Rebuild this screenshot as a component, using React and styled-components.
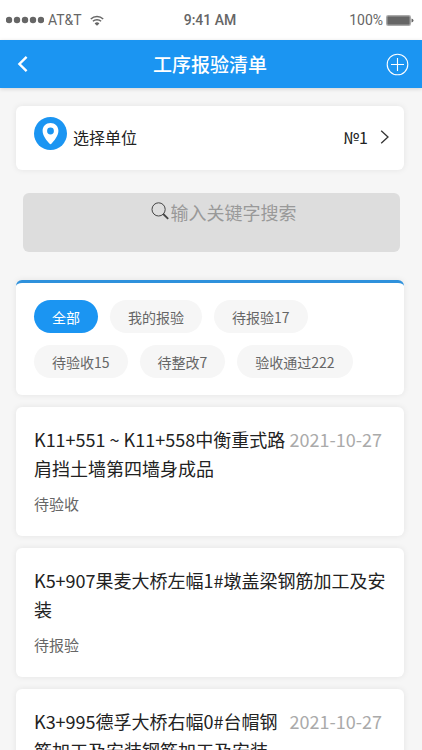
import React, { useState } from "react";
import styled, { createGlobalStyle } from "styled-components";

const filters = ["全部", "我的报验", "待报验17", "待验收15", "待整改7", "验收通过222"];

const records = [
    { title: "K11+551 ~ K11+558中衡重式路肩挡土墙第四墙身成品", date: "2021-10-27", state: "待验收" },
    { title: "K5+907果麦大桥左幅1#墩盖梁钢筋加工及安装", state: "待报验" },
    { title: "K3+995德孚大桥右幅0#台帽钢筋加工及安装钢筋加工及安装", date: "2021-10-27" },
];

function StatusBar() {
    return (
        <StatusWrap>
            <Carrier>
                <svg width="38" height="8" viewBox="0 0 38 8" fill="#666">
                    {[3, 11, 19, 27, 35].map((x) => (
                        <circle key={x} cx={x} cy="4" r="3.2" />
                    ))}
                </svg>
                <span>AT&amp;T</span>
                <WifiIcon width="14" height="11" viewBox="0 0 14 11">
                    <path d="M0.8 4 A9 9 0 0 1 13.2 4" fill="none" stroke="#666" strokeWidth="1.5" />
                    <path d="M2.9 6.3 A6 6 0 0 1 11.1 6.3" fill="none" stroke="#666" strokeWidth="1.5" />
                    <path d="M4.6 8.4 A3.6 3.6 0 0 1 9.4 8.4 L7 10.8 Z" fill="#666" />
                </WifiIcon>
            </Carrier>
            <Clock>9:41 AM</Clock>
            <Battery>
                <span>100%</span>
                <svg width="28" height="11" viewBox="0 0 28 11">
                    <rect x="0.5" y="0.5" width="24" height="10" rx="1" fill="#fff" stroke="#aaa" />
                    <rect x="1.2" y="1.2" width="22.6" height="8.6" fill="#666" />
                    <path d="M25.5 3.5 Q27.5 4 27.5 5.5 Q27.5 7 25.5 7.5 Z" fill="#666" />
                </svg>
            </Battery>
        </StatusWrap>
    );
}

function App() {
    const [active, setActive] = useState("全部");
    const [keyword, setKeyword] = useState("");

    return (
        <Page>
            <GlobalStyle />
            <StatusBar />
            <Header>
                <IconButton type="button" aria-label="返回">
                    <svg width="22" height="24" viewBox="0 0 22 24" fill="none" stroke="#fff" strokeWidth="2.4">
                        <path d="M14.6 4.8 L7.4 12 L14.6 19.2" />
                    </svg>
                </IconButton>
                <HeaderTitle>工序报验清单</HeaderTitle>
                <IconButton type="button" aria-label="新增">
                    <svg width="24" height="24" viewBox="0 0 24 24" fill="none" stroke="#fff" strokeWidth="1.1">
                        <circle cx="11.5" cy="12.5" r="10.3" />
                        <path d="M11.5 6 V19 M5 12.5 H18" />
                    </svg>
                </IconButton>
            </Header>

            <Content>
                <UnitButton type="button">
                    <svg width="33" height="33" viewBox="0 0 33 33">
                        <circle cx="16.5" cy="16.5" r="16.5" fill="#1b95f2" />
                        <path
                            fillRule="evenodd"
                            fill="#fff"
                            d="M16.5 6 C12 6 8.6 9.4 8.6 13.7 C8.6 19 13.4 24.2 15.4 26.6 Q16.5 27.8 17.6 26.6 C19.6 24.2 24.4 19 24.4 13.7 C24.4 9.4 21 6 16.5 6 Z M16.5 10.6 A3.4 3.4 0 1 1 16.5 17.4 A3.4 3.4 0 1 1 16.5 10.6 Z"
                        />
                    </svg>
                    <UnitLabel>选择单位</UnitLabel>
                    <UnitValue>
                        №1
                        <svg width="10" height="14" viewBox="0 0 10 14" fill="none" stroke="#333" strokeWidth="1.3">
                            <path d="M1.2 0.7 L8 7 L1.2 13.3" />
                        </svg>
                    </UnitValue>
                </UnitButton>

                <SearchBox>
                    <svg width="18" height="18" viewBox="0 0 18 18" fill="none" stroke="#444">
                        <circle cx="7.6" cy="7.4" r="6.6" strokeWidth="1" />
                        <path d="M12.2 12 L17.2 16.8" strokeWidth="1.8" />
                    </svg>
                    <SearchInput
                        type="text"
                        aria-label="搜索"
                        placeholder="输入关键字搜索"
                        value={keyword}
                        onChange={(e) => setKeyword(e.target.value)}
                    />
                </SearchBox>

                <FilterCard>
                    {filters.map((f) => (
                        <Chip key={f} type="button" $active={f === active} onClick={() => setActive(f)}>
                            {f}
                        </Chip>
                    ))}
                </FilterCard>

                <RecordList>
                    {records.map((r) => (
                        <Record key={r.title}>
                            <RecordTop>
                                <RecordTitle>{r.title}</RecordTitle>
                                {r.date && <RecordDate>{r.date}</RecordDate>}
                            </RecordTop>
                            {r.state && <RecordState>{r.state}</RecordState>}
                        </Record>
                    ))}
                </RecordList>
            </Content>
        </Page>
    );
}

const GlobalStyle = createGlobalStyle`
* {
    box-sizing: border-box;
}
body {
    margin: 0;
    background-color: #f6f6f6;
    font-family: "Noto Sans CJK SC", sans-serif;
    color: #222;
}
button, input {
    font-family: inherit;
    color: inherit;
    border: none;
    padding: 0;
    background: none;
}
svg {
    display: block;
    flex-shrink: 0;
}
`;

const Page = styled.div`
height: 100vh;
display: flex;
flex-direction: column;
overflow: hidden;
`;

const StatusWrap = styled.div`
display: grid;
grid-template-columns: 1fr auto 1fr;
align-items: center;
height: 40px;
flex-shrink: 0;
padding: 0 8px 0 6px;
background-color: #fff;
font-family: Roboto, "Liberation Sans", sans-serif;
font-size: 14px;
color: #666;
`;

const Carrier = styled.div`
display: flex;
align-items: center;
gap: 4px;
`;

const WifiIcon = styled.svg`
margin-left: 4px;
`;

const Clock = styled.span`
font-weight: 500;
`;

const Battery = styled.div`
display: flex;
align-items: center;
justify-content: flex-end;
gap: 3px;
`;

const Header = styled.header`
display: flex;
align-items: center;
justify-content: space-between;
height: 48px;
flex-shrink: 0;
padding: 0 12px;
background-color: #1b95f2;
box-shadow: 0 1px 4px rgba(0, 0, 0, 0.15);
z-index: 1;
`;

const HeaderTitle = styled.h1`
margin: 0;
color: #fff;
font-size: 19px;
font-weight: 500;
line-height: 28px;
`;

const IconButton = styled.button`
cursor: pointer;
`;

const Content = styled.main`
flex: 1;
min-height: 0;
padding: 18px 18px 0 16px;
overflow-y: auto;
scrollbar-width: none;
`;

const Card = styled.div`
background-color: #fff;
border-radius: 6px;
box-shadow: 0 0 6px rgba(0, 0, 0, 0.08);
`;

const UnitButton = styled(Card).attrs({ as: "button" })`
display: flex;
align-items: flex-start;
gap: 6px;
width: 100%;
padding: 11px 14px 20px 18px;
font-size: 16px;
line-height: 24px;
text-align: left;
background-color: #fff;
cursor: pointer;
`;

const UnitLabel = styled.span`
flex: 1;
padding-top: 8px;
`;

const UnitValue = styled.span`
display: flex;
align-items: center;
gap: 12px;
padding-top: 8px;
`;

const SearchBox = styled.label`
display: flex;
align-items: flex-start;
justify-content: center;
gap: 2px;
margin: 23px 4px 0 7px;
padding: 9px 0 27px 24px;
background-color: #ddd;
border-radius: 6px;
`;

const SearchInput = styled.input`
width: 7em;
height: 26px;
margin-top: -3px;
font-size: 18px;
outline: none;
&::placeholder {
    color: #999;
    opacity: 1;
}
`;

const FilterCard = styled(Card)`
display: flex;
flex-wrap: wrap;
gap: 12px;
margin-top: 28px;
padding: 17px 18px;
border-top: 3px solid #2f91dc;
`;

const Chip = styled.button`
height: 33px;
padding: 0 18px;
border-radius: 17px;
font-size: 14px;
color: ${(props) => (props.$active ? "#fff" : "#666")};
background-color: ${(props) => (props.$active ? "#1b95f2" : "#f6f6f6")};
cursor: pointer;
`;

const RecordList = styled.ul`
display: flex;
flex-direction: column;
gap: 12px;
margin: 12px 0 0;
padding: 0;
list-style: none;
`;

const Record = styled(Card).attrs({ as: "li" })`
padding: 18px 18px 22px;
`;

const RecordTop = styled.div`
display: flex;
align-items: flex-start;
gap: 4px;
`;

const RecordTitle = styled.h2`
flex: 1;
margin: 0;
font-size: 18px;
font-weight: 400;
line-height: 29px;
word-break: break-all;
`;

const RecordDate = styled.time`
flex-shrink: 0;
margin-right: 4px;
font-size: 18px;
line-height: 29px;
color: #aaa;
`;

const RecordState = styled.p`
margin: 10px 0 0;
font-size: 15px;
line-height: 21px;
color: #666;
`;

export default App;
